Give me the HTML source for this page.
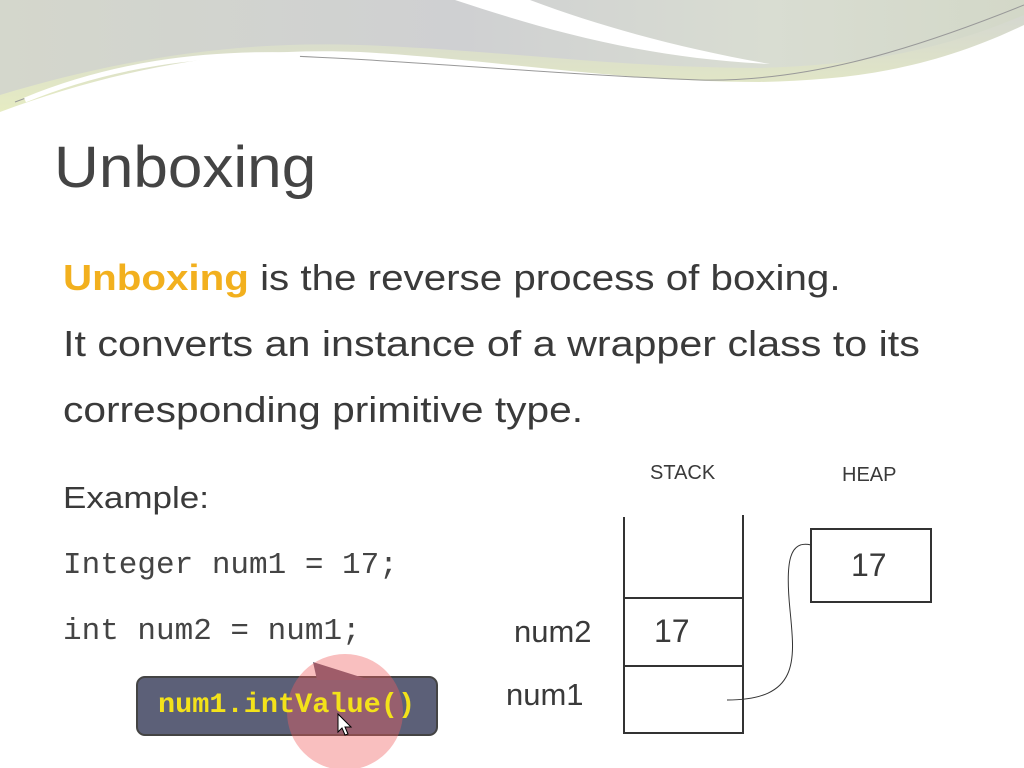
<!DOCTYPE html>
<html><head><style>
body{margin:0;width:1024px;height:768px;overflow:hidden;background:#fff;position:relative;font-family:"Liberation Sans","DejaVu Sans",sans-serif;color:#3a3a3a}
.t{position:absolute;white-space:nowrap;transform-origin:0 0}
.m{font-family:"Liberation Mono","DejaVu Sans Mono",monospace}
</style></head><body>
<svg width="1024" height="768" style="position:absolute;left:0;top:0">
<defs>
<linearGradient id="g1" x1="0" y1="0" x2="1" y2="0"><stop offset="0" stop-color="#d4d7cc"/><stop offset="0.45" stop-color="#cfd0d2"/><stop offset="0.75" stop-color="#d9ddd2"/><stop offset="1" stop-color="#d3d8c8"/></linearGradient>
<linearGradient id="g2" x1="0" y1="0" x2="0" y2="1"><stop offset="0" stop-color="#d2d4d2"/><stop offset="1" stop-color="#e6ecc2"/></linearGradient>
</defs>
<path d="M0 0H1024V25C930 70 850 80 760 82C620 82 500 60 360 52C220 46 100 75 0 112Z" fill="url(#g2)"/>
<path d="M0 0H1024V15C930 55 850 65 760 68C620 68 500 50 360 45C220 40 100 65 0 95Z" fill="url(#g1)"/>
<path d="M455 0C540 28 640 58 770 64C690 50 610 30 530 0Z" fill="#fff"/>
<path d="M15 102C100 70 180 55 260 55C380 58 560 75 700 80C800 82 900 55 1024 5" fill="none" stroke="#999" stroke-width="1"/>
<path d="M25 100C110 65 200 52 300 55" fill="none" stroke="#fff" stroke-width="5"/>
<g fill="none" stroke="#333" stroke-width="2">
<line x1="624" y1="517" x2="624" y2="734"/><line x1="743" y1="515" x2="743" y2="734"/>
<line x1="624" y1="598" x2="743" y2="598"/><line x1="624" y1="666" x2="743" y2="666"/><line x1="624" y1="733" x2="743" y2="733"/>
<rect x="811" y="529" width="120" height="73"/>
</g>
<path d="M727 700C800 700 795 660 790 610C785 560 790 540 811 545" fill="none" stroke="#333" stroke-width="1"/>
<rect x="137" y="677" width="300" height="58" rx="8" fill="#5c6078" stroke="#444" stroke-width="2"/>
<path d="M313 662L317 680H370Z" fill="#6a5a70"/>
<circle cx="345" cy="712" r="58" fill="#f06060" opacity="0.4"/>
<path d="M338 714l0 18 4-4 3 7 3-1-3-7 6 0z" fill="#fff" stroke="#000" stroke-width="1"/>
</svg>
<div class="t" style="left:54px;top:134px;font-size:58px;color:#444;transform:scaleX(1.07)">Unboxing</div>
<div class="t" style="left:63px;top:257px;font-size:36px;transform:scaleX(1.12)"><span style="color:#f2b01e;font-weight:bold">Unboxing</span> is the reverse process of boxing.</div>
<div class="t" style="left:63px;top:323px;font-size:36px;transform:scaleX(1.145)">It converts an instance of a wrapper class to its</div>
<div class="t" style="left:63px;top:389px;font-size:36px;transform:scaleX(1.13)">corresponding primitive type.</div>
<div class="t" style="left:63px;top:480px;font-size:31px;transform:scaleX(1.13)">Example:</div>
<div class="t m" style="left:63px;top:548px;font-size:31px;color:#444">Integer num1 = 17;</div>
<div class="t m" style="left:63px;top:614px;font-size:31px;color:#444">int num2 = num1;</div>
<div class="t" style="left:650px;top:462px;font-size:20px">STACK</div>
<div class="t" style="left:842px;top:464px;font-size:20px">HEAP</div>
<div class="t" style="left:851px;top:547px;font-size:32px">17</div>
<div class="t" style="left:654px;top:613px;font-size:32px">17</div>
<div class="t" style="left:514px;top:614px;font-size:31px">num2</div>
<div class="t" style="left:506px;top:677px;font-size:31px">num1</div>
<div class="t m" style="left:158px;top:690px;font-size:28px;font-weight:bold;color:#f3e21a;transform:scaleX(1.02)">num1.intValue()</div>
</body></html>
